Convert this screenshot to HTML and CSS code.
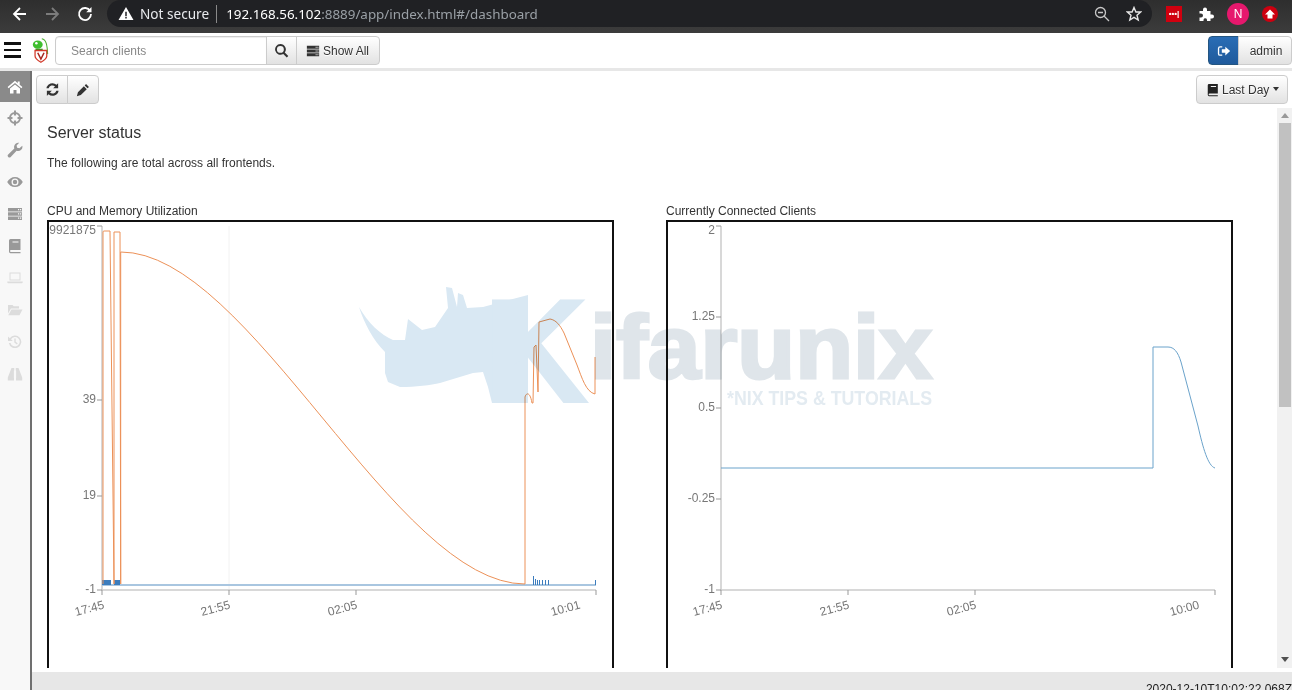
FILE: index.html
```html
<!DOCTYPE html>
<html lang="en">
<head>
<meta charset="utf-8">
<title>Dashboard</title>
<link rel="stylesheet" href="styles.css">
</head>
<body>
<svg class="sprite" width="0" height="0">
  <symbol id="i-home" viewBox="0 0 16 16"><path d="M8 1.800 .6 8l1 1.200L8 3.900l6.400 5.300 1-1.200-2.700-2.300V2.400h-2v1.800Z"/><path d="M3 9.600 8 5.400l5 4.200v4.900H9.500V11h-3v3.500H3Z"/></symbol>
  <symbol id="i-cross" viewBox="0 0 16 16"><circle cx="8" cy="8" r="5" fill="none" stroke="currentColor" stroke-width="2"/><path d="M7 .5h2v5H7ZM7 10.500h2v5H7ZM.5 7h5v2h-5ZM10.500 7h5v2h-5Z"/></symbol>
  <symbol id="i-wrench" viewBox="0 0 16 16"><path d="M15.300 3.800a4.300 4.300 0 0 1-5.700 5L3.700 14.900a1.700 1.700 0 0 1-2.500-2.400L7.300 6.400A4.300 4.300 0 0 1 12.200.8L9.600 3.400l.5 2.300 2.300.6Z"/></symbol>
  <symbol id="i-eye" viewBox="0 0 16 16"><path fill-rule="evenodd" d="M8 3c3.400 0 6.200 2 7.800 5-1.600 3-4.400 5-7.800 5S1.800 11 .2 8C1.800 5 4.600 3 8 3Zm0 1.500A3.500 3.500 0 1 0 8 11.500 3.500 3.500 0 0 0 8 4.500Z"/><circle cx="8" cy="8" r="2.200"/></symbol>
  <symbol id="i-server" viewBox="0 0 16 16"><path fill-rule="evenodd" d="M1 2h14v3.400H1Zm10 1v1.200h1.200V3Zm2 0v1.200h1.200V3ZM1 6.300h14v3.400H1Zm10 1v1.200h1.200V7.300Zm2 0v1.200h1.200V7.300ZM1 10.600h14V14H1Zm10 1v1.200h1.200v-1.200Zm2 0v1.200h1.200v-1.200Z"/></symbol>
  <symbol id="i-book" viewBox="0 0 16 16"><path fill-rule="evenodd" d="M3.500 1h10v11H4a1 1 0 0 0 0 2h9.500v1.200h-10A1.700 1.700 0 0 1 2 13.500v-11A1.500 1.500 0 0 1 3.500 1ZM5.500 3.500v1h6v-1Z"/></symbol>
  <symbol id="i-laptop" viewBox="0 0 16 16"><path fill-rule="evenodd" d="M2.500 2.500h11v8h-11Zm1 1v6h9v-6ZM.3 11.500h15.400v.7a1 1 0 0 1-1 1H1.300a1 1 0 0 1-1-1Z"/></symbol>
  <symbol id="i-folder" viewBox="0 0 16 16"><path d="M1 3h4.500l1.200 1.300H12v2.200H4L1 11.500Z"/><path d="M4.500 7.500h11l-3 5.700H1.200Z"/></symbol>
  <symbol id="i-history" viewBox="0 0 16 16"><path d="M2.800 4.200A6.300 6.300 0 1 1 1.800 9h1.700A4.700 4.700 0 1 0 4 5.300L5.800 7H1V2.400Z"/><path d="M7.300 4.500h1.400v3.300l2 1.500-.8 1.100-2.600-2Z"/></symbol>
  <symbol id="i-binoc" viewBox="0 0 16 16"><path d="M4.500 2h2.700v2.500h-.3V12H7v2.500H.8v-3L3.500 4.500ZM11.500 2H8.800v2.500h.3V12H9v2.500h6.200v-3L12.500 4.500Z"/></symbol>
  <symbol id="i-refresh" viewBox="0 0 16 16"><path d="M14 1.300v5.400H8.700l2-2A4.200 4.200 0 0 0 3.900 6.700H1.500A6.500 6.500 0 0 1 12.300 3Z"/><path d="M2 14.700V9.300h5.300l-2 2a4.200 4.200 0 0 0 6.800-2h2.400A6.500 6.500 0 0 1 3.700 13Z"/></symbol>
  <symbol id="i-pencil" viewBox="0 0 16 16"><path d="M11.500 1.200l3.300 3.300-1.600 1.600-3.300-3.300ZM9 3.700 12.300 7l-6.800 6.800L1 15l1.200-4.500Z"/></symbol>
  <symbol id="i-search" viewBox="0 0 16 16"><path fill-rule="evenodd" d="M6.800 1a5.800 5.800 0 0 1 4.700 9.200l3.700 3.700-1.600 1.600-3.700-3.700A5.800 5.800 0 1 1 6.800 1Zm0 2.100a3.700 3.700 0 1 0 0 7.400 3.700 3.700 0 0 0 0-7.400Z"/></symbol>
  <symbol id="i-signout" viewBox="0 0 16 16"><path d="M6 2.500H3.500A2.500 2.500 0 0 0 1 5v6a2.500 2.500 0 0 0 2.500 2.500H6V12H3.500a1 1 0 0 1-1-1V5a1 1 0 0 1 1-1H6Z"/><path d="M9.500 3 15 8l-5.500 5V10h-4V6h4Z"/></symbol>
</svg>

<header class="browser">
  <svg class="b-ico" viewBox="0 0 16 16"><path d="M14 8H2.500M8 2 2 8l6 6" fill="none" stroke="#fff" stroke-width="1.800"/></svg>
  <svg class="b-ico fwd" viewBox="0 0 16 16"><path d="M2 8h11.500M8 2l6 6-6 6" fill="none" stroke="#7c7c7c" stroke-width="1.800"/></svg>
  <svg class="b-ico rel" viewBox="0 0 16 16"><path d="M13.200 5A6 6 0 1 0 14 8" fill="none" stroke="#fff" stroke-width="1.800"/><path d="M14.500 1v5.300H9.200Z" fill="#fff"/></svg>
  <div class="omnibox">
    <svg class="warn" viewBox="0 0 16 16"><path fill-rule="evenodd" d="M8 1l8 14H0ZM7.200 6v4.800h1.600V6Zm0 5.800v1.600h1.600v-1.600Z" fill="#fff"/></svg>
    <span class="notsecure">Not secure</span>
    <span class="divider"></span>
    <span class="url">192.168.56.102<span class="url-dim">:8889/app/index.html#/dashboard</span></span>
    <span class="spacer"></span>
    <svg class="o-ico" viewBox="0 0 16 16"><circle cx="6.500" cy="6.500" r="5" fill="none" stroke="#c8c8c8" stroke-width="1.300"/><path d="M10 10l5 5M4 6.500h5" stroke="#c8c8c8" stroke-width="1.300"/></svg>
    <svg class="o-ico star" viewBox="0 0 16 16"><path d="M8 1.500 9.900 6h4.800L11 9.200l1.200 4.800L8 11.400 3.800 14 5 9.200 1.300 6h4.800Z" fill="none" stroke="#e6e6e6" stroke-width="1.400"/></svg>
  </div>
  <span class="ext lastpass">•••|</span>
  <svg class="ext puzzle" viewBox="0 0 16 16"><path d="M1.500 5H5V3.500a2 2 0 0 1 4 0V5h3.500v3.500H14a2 2 0 0 1 0 4h-1.500V15H9v-1.300a1.800 1.800 0 0 0-3.500 0V15h-4v-3.500H3a2 2 0 0 0 0-4H1.500Z" fill="#fff"/></svg>
  <span class="avatar">N</span>
  <span class="ext-red"><svg viewBox="0 0 16 16"><path d="M8 3.500l5 5h-2.500v4h-5v-4H3Z" fill="#fff"/></svg></span>
</header>

<nav class="navbar">
  <span class="burger"><i></i><i></i><i></i></span>
  <svg class="logo" viewBox="0 0 20 28">
    <path d="M12 1C17 2 18 8 18.500 18" fill="none" stroke="#4caf30" stroke-width="1.200"/>
    <ellipse cx="7.500" cy="7.500" rx="5.500" ry="4.500" fill="#3fbf2e"/>
    <circle cx="6" cy="6" r="1.400" fill="#fff"/>
    <path d="M5 12h8v2H5Z" fill="#2e9e22"/>
    <path d="M4.500 14h13v6c0 3-3 5-6.500 7-3.500-2-6.500-4-6.500-7Z" fill="#fff" stroke="#d23a2a" stroke-width="1.400"/>
    <path d="M7.500 16.500l3.500 7 3.500-7" fill="none" stroke="#a82820" stroke-width="1.700"/>
  </svg>
  <div class="btn-group search-group">
    <input class="search-input" type="text" placeholder="Search clients">
    <button class="btn icon-btn search-btn" type="button"><svg class="ic ic-lg"><use href="#i-search"/></svg></button>
    <button class="btn showall" type="button"><svg class="ic"><use href="#i-server"/></svg>Show All</button>
  </div>
  <span class="spacer"></span>
  <div class="btn-group">
    <button class="btn btn-primary" type="button"><svg class="ic"><use href="#i-signout"/></svg></button>
    <button class="btn admin" type="button">admin</button>
  </div>
</nav>

<div class="app">
  <aside class="sidebar">
    <a class="side-item active"><svg class="ic"><use href="#i-home"/></svg></a>
    <a class="side-item"><svg class="ic"><use href="#i-cross"/></svg></a>
    <a class="side-item"><svg class="ic"><use href="#i-wrench"/></svg></a>
    <a class="side-item"><svg class="ic"><use href="#i-eye"/></svg></a>
    <a class="side-item"><svg class="ic"><use href="#i-server"/></svg></a>
    <a class="side-item"><svg class="ic"><use href="#i-book"/></svg></a>
    <a class="side-item off"><svg class="ic"><use href="#i-laptop"/></svg></a>
    <a class="side-item off"><svg class="ic"><use href="#i-folder"/></svg></a>
    <a class="side-item off"><svg class="ic"><use href="#i-history"/></svg></a>
    <a class="side-item off"><svg class="ic"><use href="#i-binoc"/></svg></a>
  </aside>
  <div class="right">
    <main class="main">
      <div class="toolbar">
        <div class="btn-group">
          <button class="btn icon-btn tool" type="button"><svg class="ic ic-lg"><use href="#i-refresh"/></svg></button>
          <button class="btn icon-btn tool" type="button"><svg class="ic"><use href="#i-pencil"/></svg></button>
        </div>
        <span class="spacer"></span>
        <button class="btn lastday" type="button"><svg class="ic"><use href="#i-book"/></svg>Last Day<span class="caret"></span></button>
      </div>
      <div class="panel">
        <div class="content">
          <h1 class="title">Server status</h1>
          <p class="lead">The following are total across all frontends.</p>
          <div class="charts">
            <section class="chart">
              <h2 class="chart-title">CPU and Memory Utilization</h2>
              <div class="frame">
                <svg class="plot" viewBox="49 222 563 446">
                  <path class="grid" d="M229 226V590"/>
                  <path class="axis" d="M102 226V590H596"/>
                  <path class="ticks" d="M97 226h5M97 400h5M97 496h5M97 590h5M102 590v5M229 590v5M356 590v5M596 590v5"/>
                  <path class="base" d="M102 585H596"/>
                  <path class="bars" d="M102 580h9v5h-9ZM114 580h6v5h-6ZM533 576h1v9h-1ZM535 579h1v6h-1ZM537 580h1v5h-1ZM539 580h1v5h-1ZM542 580h1v5h-1ZM545 580h1v5h-1ZM548 580h1v5h-1ZM595 580h1v5h-1Z"/>
                  <path class="orange" d="M103 584V232Q103 231 104 231H110L114 584V232H120L120.700 584V252C250 252 395 584 525 584V397C526 393 530 391 532 403H533L534 347 536 345 538 392 539 322 550 319C556 320 560 325 564 333L577 365C582 378 586 392 595 394V357"/>
                  <text class="tick" x="96" y="234" text-anchor="end">9921875</text>
                  <text class="tick" x="96" y="403" text-anchor="end">39</text>
                  <text class="tick" x="96" y="499" text-anchor="end">19</text>
                  <text class="tick" x="96" y="593" text-anchor="end">-1</text>
                  <text class="tick" transform="translate(76 616) rotate(-15)">17:45</text>
                  <text class="tick" transform="translate(202 616) rotate(-15)">21:55</text>
                  <text class="tick" transform="translate(329 616) rotate(-15)">02:05</text>
                  <text class="tick" transform="translate(552 616) rotate(-15)">10:01</text>
                </svg>
              </div>
            </section>
            <section class="chart">
              <h2 class="chart-title">Currently Connected Clients</h2>
              <div class="frame">
                <svg class="plot" viewBox="668 222 563 446">
                  <path class="axis" d="M721 226V590H1215"/>
                  <path class="ticks" d="M716 226h5M716 317h5M716 408h5M716 499h5M716 590h5M721 590v5M848 590v5M975 590v5M1215 590v5"/>
                  <path class="blue" d="M721 468H1153V347H1168C1174 347 1178 352 1181 362L1198 426C1203 448 1208 466 1215 468"/>
                  <text class="tick" x="715" y="234" text-anchor="end">2</text>
                  <text class="tick" x="715" y="320" text-anchor="end">1.25</text>
                  <text class="tick" x="715" y="411" text-anchor="end">0.5</text>
                  <text class="tick" x="715" y="502" text-anchor="end">-0.25</text>
                  <text class="tick" x="715" y="593" text-anchor="end">-1</text>
                  <text class="tick" transform="translate(694 616) rotate(-15)">17:45</text>
                  <text class="tick" transform="translate(821 616) rotate(-15)">21:55</text>
                  <text class="tick" transform="translate(948 616) rotate(-15)">02:05</text>
                  <text class="tick" transform="translate(1171 616) rotate(-15)">10:00</text>
                </svg>
              </div>
            </section>
          </div>
        </div>
        <div class="scrollbar">
          <span class="arrow up"></span>
          <span class="thumb"></span>
          <span class="arrow down"></span>
        </div>
      </div>
      <svg class="watermark" viewBox="0 0 600 130" aria-label="Kifarunix">
        <path class="rhino" d="M3 22C8 38 17 55 29 67V88L32 97 44 102C60 102 75 100 84 98L117 88 127 87 132 102 136 118H172V10L127 22 111 23 107 10 102 8 101 22 96 3 90 2 92 23 79 42 66 45 52 34 49 55H37C25 50 12 38 3 22Z"/>
        <text class="wm-k" x="126" y="118">K</text>
        <text class="wm-name" x="234" y="93" textLength="342" lengthAdjust="spacingAndGlyphs">ifarunix</text>
        <text class="wm-tag" x="371" y="120" textLength="205" lengthAdjust="spacingAndGlyphs">*NIX TIPS &amp; TUTORIALS</text>
      </svg>
    </main>
    <footer class="footer">2020-12-10T10:02:22.068Z</footer>
  </div>
</div>
</body>
</html>
```

FILE: styles.css
```css
* { box-sizing: border-box; }
html, body { margin: 0; height: 690px; overflow: hidden; }
body {
  width: 1292px;
  display: flex;
  flex-direction: column;
  font-family: "Liberation Sans", Arial, sans-serif;
  font-size: 12px;
  color: #333;
  background: #fff;
}
.sprite { position: absolute; }
.spacer { flex: 1; }
.ic { width: 14px; height: 14px; fill: currentColor; flex: none; }
.ic-lg { width: 15px; height: 15px; }

.browser {
  height: 33px;
  flex: none;
  display: flex;
  align-items: center;
  background: linear-gradient(#2e2e2e, #3c3c3c);
  padding: 0 0 6px 12px;
  font-family: "Noto Sans", sans-serif;
  overflow: hidden;
}
.b-ico { width: 16px; height: 16px; flex: none; }
.fwd { margin-left: 16px; }
.rel { margin-left: 17px; }
.omnibox {
  margin-left: 14px;
  width: 1045px;
  height: 27px;
  border-radius: 14px;
  background: #202124;
  display: flex;
  align-items: center;
  padding: 0 4px 0 10px;
  color: #e8eaed;
}
.warn { width: 16px; height: 15px; margin-left: 1px; }
.notsecure { margin-left: 6px; font-size: 13.600px; }
.divider { width: 1px; height: 18px; background: #8a8a8a; margin: 0 9px 0 7px; }
.url { font-size: 13.400px; color: #fff; white-space: nowrap; }
.url-dim { color: #9aa0a6; }
.o-ico { width: 16px; height: 16px; }
.star { margin: 0 6px 0 16px; }
.ext { flex: none; }
.lastpass {
  margin-left: 14px;
  width: 16px;
  height: 16px;
  background: #d0000f;
  color: #fff;
  font: bold 8px/16px "Liberation Sans", sans-serif;
  text-align: center;
  overflow: hidden;
}
.puzzle { width: 16px; height: 16px; margin-left: 16px; }
.avatar {
  margin-left: 13px;
  width: 22px;
  height: 22px;
  border-radius: 50%;
  background: #e6186d;
  color: #fff;
  text-align: center;
  font: 12px/22px "Liberation Sans", sans-serif;
  flex: none;
}
.ext-red {
  margin-left: 13px;
  width: 16px;
  height: 16px;
  border-radius: 50%;
  background: #cc0010;
  flex: none;
  display: flex;
}

.navbar {
  height: 35px;
  flex: none;
  display: flex;
  align-items: center;
  background: #fff;
  padding-left: 4px;
}
.burger { width: 17px; display: flex; flex-direction: column; gap: 4px; margin-top: -1px; }
.burger i { display: block; height: 2.500px; background: #111; }
.logo { width: 18px; height: 27px; margin-left: 10px; flex: none; }
.btn-group { display: flex; }
.search-group { margin-left: 6px; }
.btn {
  height: 29px;
  font: 12px "Liberation Sans", Arial, sans-serif;
  color: #333;
  background: linear-gradient(#fff, #e2e2e2);
  border: 1px solid #ccc;
  padding: 0 9px;
  display: flex;
  align-items: center;
  gap: 3px;
  border-radius: 4px;
  text-shadow: 0 1px 0 #fff;
}
.btn-group .btn:not(:first-child) { border-top-left-radius: 0; border-bottom-left-radius: 0; margin-left: -1px; }
.btn-group .btn:not(:last-child), .btn-group input:not(:last-child) { border-top-right-radius: 0; border-bottom-right-radius: 0; }
.search-input {
  width: 212px;
  height: 29px;
  border: 1px solid #ccc;
  border-radius: 4px;
  padding: 0 15px;
  font: 12px "Liberation Sans", Arial, sans-serif;
  color: #555;
  box-shadow: inset 0 1px 1px rgba(0,0,0,.075);
}
.search-input::placeholder { color: #888; opacity: 1; }
.icon-btn { justify-content: center; padding: 0; }
.search-btn { width: 31px; }
.showall { width: 84px; padding: 0 9px; }
.btn-primary {
  width: 31px;
  justify-content: center;
  padding: 0;
  color: #fff;
  background: linear-gradient(#2a6db5, #1f5a9c);
  border-color: #245580;
}
.admin { width: 54px; justify-content: center; padding: 0 0 0 2px; }

.app {
  flex: 1;
  min-height: 0;
  display: flex;
  border-top: 3px solid #e7e7e7;
}
.sidebar {
  width: 32px;
  flex: none;
  background: #f8f8f8;
  border-right: 2px solid #707070;
  display: flex;
  flex-direction: column;
}
.side-item {
  height: 32px;
  flex: none;
  display: flex;
  align-items: center;
  justify-content: center;
  color: #999;
}
.side-item.active { height: 31px; background: #8a8a8a; color: #fff; }
.side-item.off { color: #dcdcdc; }
.side-item .ic { width: 16px; height: 16px; }

.right { flex: 1; min-width: 0; display: flex; flex-direction: column; }
.main { flex: 1; min-height: 0; display: flex; flex-direction: column; position: relative; padding-bottom: 4px; }
.toolbar { display: flex; align-items: flex-start; padding: 4px 4px 0 4px; height: 37px; flex: none; }
.tool { width: 32px; }
.lastday { width: 92px; padding: 0 0 0 9px; gap: 2px; }
.lastday .ic { width: 14px; height: 14px; color: #222; }
.caret {
  width: 0; height: 0;
  border-left: 3.500px solid transparent;
  border-right: 3.500px solid transparent;
  border-top: 4px solid #333;
  margin: -1px 0 0 2px;
}
.panel { flex: 1; min-height: 0; display: flex; overflow: hidden; }
.content { flex: 1; min-width: 0; padding: 0 0 0 15px; overflow: hidden; }
.title { margin: 16px 0 0; font-size: 16px; font-weight: 400; line-height: 18px; color: #333; }
.lead { margin: 14px 0 0; font-size: 12px; line-height: 14px; color: #333; }
.charts { display: flex; gap: 52px; margin-top: 34px; }
.chart { width: 567px; flex: none; }
.chart-title { margin: 0; font-size: 12px; font-weight: 400; line-height: 14px; color: #333; }
.frame { border: 2px solid #111; border-bottom: 0; height: 448px; margin-top: 2px; }
.plot { display: block; width: 563px; height: 446px; }
.grid { stroke: #f2f2f2; fill: none; }
.axis { stroke: #ccc; fill: none; stroke-width: 1.500; }
.ticks { stroke: #999; fill: none; stroke-width: 1; }
.tick { font: 12px "Liberation Sans", Arial, sans-serif; fill: #777; }
.base { stroke: #a9c6e0; stroke-width: 2; fill: none; }
.bars { fill: #3b7cbd; }
.orange { stroke: #ec9158; stroke-width: 1; fill: none; }
.blue { stroke: #6ba3cb; stroke-width: 1; fill: none; }

.scrollbar {
  width: 15px;
  flex: none;
  background: #f1f1f1;
  display: flex;
  flex-direction: column;
  align-items: center;
}
.thumb { width: 12px; height: 284px; background: #c1c1c1; margin-top: 5px; }
.arrow { width: 0; height: 0; border-left: 4px solid transparent; border-right: 4px solid transparent; }
.arrow.up { border-bottom: 5px solid #999; margin-top: 5px; }
.arrow.down { border-top: 5px solid #505050; margin-top: auto; margin-bottom: 6px; }

.watermark {
  position: absolute;
  left: 324px;
  top: 214px;
  width: 600px;
  height: 130px;
  mix-blend-mode: multiply;
  pointer-events: none;
}
.rhino { fill: #d9e8f3; }
.wm-k { font: 700 150px "Liberation Sans", Arial, sans-serif; fill: #d9e8f3; }
.wm-name { font: 700 89px "Liberation Sans", Arial, sans-serif; fill: #dfe5ea; stroke: #dfe5ea; stroke-width: 3px; }
.wm-tag { font: 700 20px "Liberation Sans", Arial, sans-serif; fill: #e3ebf1; }

.footer {
  height: 18px;
  flex: none;
  background: #e7e7e7;
  color: #222;
  font-size: 12px;
  line-height: 18px;
  padding-top: 8px;
  text-align: right;
  white-space: nowrap;
}
```
